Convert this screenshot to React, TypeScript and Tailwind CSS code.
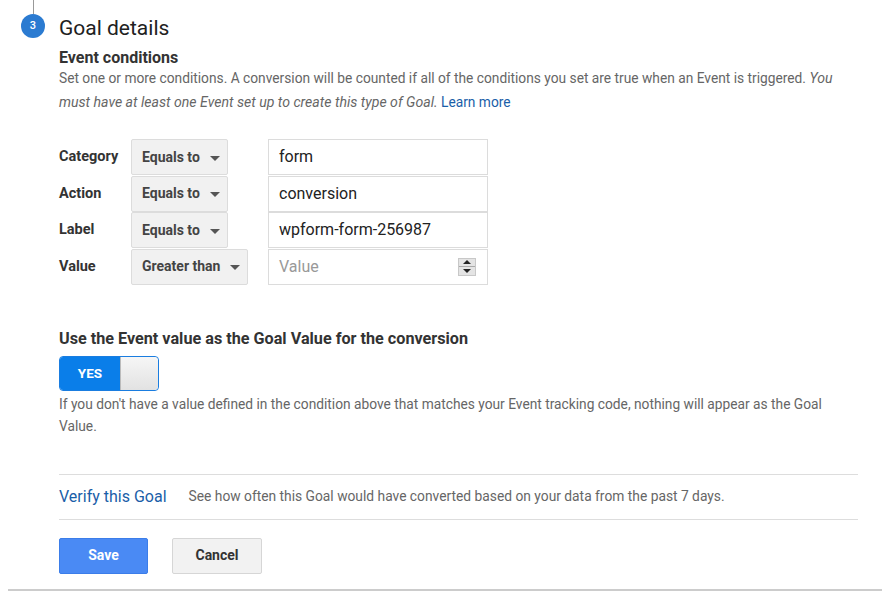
import React from "react";

function Caret() {
  return (
    <svg width="10" height="5" viewBox="0 0 10 5" className="ml-[10px] mt-[2px]">
      <path d="M0 0h10L5 5z" fill="#555" />
    </svg>
  );
}

function SelectBox({ text, width }: { text: string; width: string }) {
  return (
    <div
      className={`${width} h-[36px] flex items-center pl-[10px] bg-[#f1f1f1] border border-[#dcdcdc] rounded-[2px] text-[14px] font-bold text-[#444]`}
    >
      <span>{text}</span>
      <Caret />
    </div>
  );
}

function Spinner() {
  return (
    <div className="w-[18px] h-[18px] bg-[#e4e4e4] border border-[#c8c8c8] flex flex-col items-center justify-center gap-[2px]">
      <svg width="8" height="4" viewBox="0 0 8 4">
        <path d="M0 4L4 0l4 4z" fill="#222" />
      </svg>
      <div className="w-full h-px bg-[#aaa]" />
      <svg width="8" height="4" viewBox="0 0 8 4">
        <path d="M0 0h8L4 4z" fill="#222" />
      </svg>
    </div>
  );
}

const rows = [
  { label: "Category", op: "Equals to", value: "form", w: "w-[97px]" },
  { label: "Action", op: "Equals to", value: "conversion", w: "w-[97px]" },
  { label: "Label", op: "Equals to", value: "wpform-form-256987", w: "w-[97px]" },
  { label: "Value", op: "Greater than", value: "", w: "w-[117px]" },
];

export default function App() {
  return (
    <div className="w-[888px] h-[597px] bg-white font-['Roboto',sans-serif] text-[#333] overflow-hidden">
      <div className="flex">
        <div className="w-[59px] shrink-0 pl-[21px]">
          <div className="w-[24px] flex flex-col items-center">
            <div className="w-px h-[14px] bg-[#999]" />
            <div className="w-[24px] h-[24px] rounded-full bg-[#2b7bd1] text-white text-[11px] font-medium flex items-center justify-center">
              3
            </div>
          </div>
        </div>
        <div className="w-[799px]">
          <h1 className="mt-[14px] text-[21px] leading-[28px] text-[#212121]">Goal details</h1>
          <h2 className="mt-[6px] text-[16px] leading-[20px] font-bold text-[#333]">Event conditions</h2>
          <p className="-mt-[2px] text-[13.75px] leading-[24px] text-[#666]">
            Set one or more conditions. A conversion will be counted if all of the conditions you set are true when an
            Event is triggered. <i className="text-[14.1px]">You must have at least one Event set up to create this type of Goal.</i>{" "}
            <a className="text-[#1a5ea8]">Learn more</a>
          </p>

          <div className="mt-[25px] flex flex-col">
            {rows.map((r, i) => (
              <div key={r.label} className={`flex items-center ${i > 0 ? "mt-[0.5px]" : ""}`}>
                <div className="w-[72px] text-[14.5px] font-bold text-[#333]">{r.label}</div>
                <SelectBox text={r.op} width={r.w} />
                <div className={r.op === "Greater than" ? "w-[20px]" : "w-[40px]"} />
                <div className="w-[220px] h-[36px] border border-[#dcdcdc] flex items-center pl-[10px] pr-[11px] text-[16px]">
                  {r.value ? (
                    <span className="text-[#222]">{r.value}</span>
                  ) : (
                    <>
                      <span className="flex-1 text-[#999]">Value</span>
                      <Spinner />
                    </>
                  )}
                </div>
              </div>
            ))}
          </div>

          <h2 className="mt-[44px] text-[16.2px] leading-[20px] font-bold text-[#333]">
            Use the Event value as the Goal Value for the conversion
          </h2>
          <div className="mt-[7px] w-[100px] h-[35px] flex rounded-[4px] overflow-hidden border border-[#1a7de0]">
            <div className="w-[60px] bg-[#0a7ee9] text-white text-[13.5px] font-bold flex items-center justify-center">
              YES
            </div>
            <div className="flex-1 bg-gradient-to-b from-[#f6f6f6] to-[#e2e2e2] border-l border-[#bbb] rounded-r-[4px]" />
          </div>
          <p className="mt-[2px] text-[13.75px] leading-[22px] text-[#666]">
            If you don&apos;t have a value defined in the condition above that matches your Event tracking code,
            nothing will appear as the Goal Value.
          </p>

          <div className="mt-[37px] h-px bg-[#ddd]" />
          <div className="h-[44px] flex items-center">
            <span className="text-[16px] text-[#1a5ea8]">Verify this Goal</span>
            <span className="ml-[22px] text-[13.8px] text-[#666]">
              See how often this Goal would have converted based on your data from the past 7 days.
            </span>
          </div>
          <div className="h-px bg-[#ddd]" />

          <div className="mt-[18px] flex gap-[24px]">
            <button className="w-[89px] h-[36px] bg-[#4a8af4] border border-[#3b7de9] rounded-[2px] text-white text-[14px] font-bold">
              Save
            </button>
            <button className="w-[90px] h-[36px] bg-[#f2f2f2] border border-[#d6d6d6] rounded-[2px] text-[#333] text-[14px] font-bold">
              Cancel
            </button>
          </div>
        </div>
      </div>
      <div className="mt-[15px] ml-[8px] w-[874px] h-[2px] bg-[#ccc]" />
    </div>
  );
}
